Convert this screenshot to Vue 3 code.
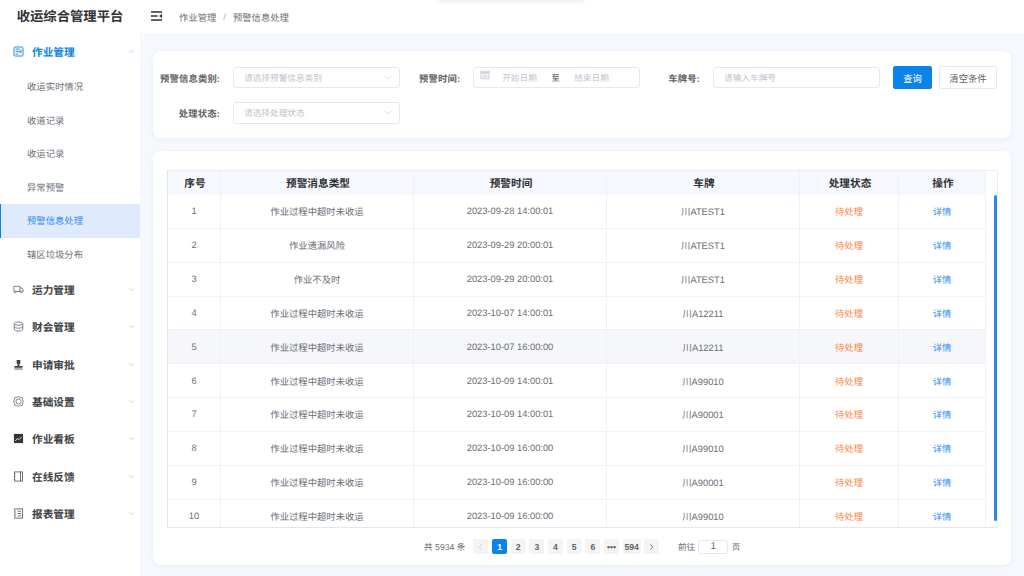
<template>
  <div class="page">
    <div class="popper-edge"></div>
    <aside class="sidebar">
      <h1 class="brand">收运综合管理平台</h1>
      <nav class="menu">
        <div class="group-head active">
          <svg class="group-icon" viewBox="0 0 12 12" fill="none" stroke="currentColor" stroke-width="0.9">
            <rect x="1" y="1" width="10" height="10" rx="1.400" fill="#e3f0fc" />
            <path d="M3 3.400h4M3 8.800h2.400" />
            <circle cx="8.200" cy="6" r="1" />
            <path d="M3 6h4" />
          </svg>
          <span>作业管理</span>
          <svg class="arrow" viewBox="0 0 10 6" fill="none" stroke="currentColor" stroke-width="0.8"><path d="M1.500 4.500 5 1.500l3.500 3" /></svg>
        </div>
        <a
          v-for="item in subItems"
          :key="item.label + item.current"
          class="sub-item"
          :class="{ current: item.current }"
        >{{ item.label }}</a>
        <div v-for="group in groups" :key="group.label" class="group-head">
          <svg class="group-icon" viewBox="0 0 12 12" fill="none" stroke="currentColor" stroke-width="0.9" v-html="group.icon"></svg>
          <span>{{ group.label }}</span>
          <svg class="arrow" viewBox="0 0 10 6" fill="none" stroke="currentColor" stroke-width="0.8"><path d="M1.500 1.500 5 4.500l3.500-3" /></svg>
        </div>
      </nav>
    </aside>

    <div class="main">
      <header class="topbar">
        <svg class="fold" viewBox="0 0 11 10" fill="none" stroke="#303133" stroke-width="1.400">
          <path d="M0 1h11M0 5h6.500M0 9h11" />
          <path d="M11 2.900 8 5l3 2.100z" fill="#303133" stroke="none" />
        </svg>
        <span class="crumb">作业管理</span>
        <span class="crumb-sep">/</span>
        <span class="crumb">预警信息处理</span>
      </header>

      <div class="content">
        <section class="card filter">
          <div class="filter-row">
            <label class="label label-first">预警信息类别:</label>
            <div class="field field-select">
              <span>请选择预警信息类别</span>
              <svg class="field-arrow" viewBox="0 0 10 6" fill="none" stroke="currentColor" stroke-width="0.7"><path d="M1 1l4 4 4-4" /></svg>
            </div>
            <label class="label label-time">预警时间:</label>
            <div class="field field-date">
              <svg class="cal" viewBox="0 0 10 10" fill="none" stroke="#c0c4cc" stroke-width="0.8">
                <rect x="1" y="1.200" width="8" height="7.600" />
                <path d="M1 2.400h8M1 3.400h8M2.600 5.400h4.800M2.600 7h4.800" />
              </svg>
              <span class="date-text">开始日期</span>
              <span class="date-sep">至</span>
              <span class="date-text">结束日期</span>
            </div>
            <label class="label label-plate">车牌号:</label>
            <div class="field field-plate"><span>请输入车牌号</span></div>
            <button class="btn btn-primary" type="button">查询</button>
            <button class="btn" type="button">清空条件</button>
          </div>
          <div class="filter-row">
            <label class="label label-first">处理状态:</label>
            <div class="field field-select">
              <span>请选择处理状态</span>
              <svg class="field-arrow" viewBox="0 0 10 6" fill="none" stroke="currentColor" stroke-width="0.7"><path d="M1 1l4 4 4-4" /></svg>
            </div>
          </div>
        </section>

        <section class="card list">
          <div class="table">
            <div class="row head">
              <div v-for="col in columns" :key="col" class="cell">{{ col }}</div>
              <div class="gutter"></div>
            </div>
            <div class="body">
              <div class="rows">
                <div
                  v-for="row in rows"
                  :key="row.no"
                  class="row"
                  :class="{ hover: row.no === 5 }"
                >
                  <div class="cell">{{ row.no }}</div>
                  <div class="cell">{{ row.type }}</div>
                  <div class="cell">{{ row.time }}</div>
                  <div class="cell">{{ row.plate }}</div>
                  <div class="cell status">待处理</div>
                  <div class="cell link">详情</div>
                </div>
              </div>
              <div class="thumb"></div>
            </div>
          </div>

          <footer class="pager">
            <span class="total">共 5934 条</span>
            <span class="page-btn muted">
              <svg viewBox="0 0 6 10" fill="none" stroke="currentColor" stroke-width="0.9"><path d="M4.500 1.500 1.500 5l3 3.500" /></svg>
            </span>
            <span
              v-for="p in pages"
              :key="p"
              class="page-btn"
              :class="{ on: p === '1', wide: p === '594' }"
            >{{ p }}</span>
            <span class="page-btn">
              <svg viewBox="0 0 6 10" fill="none" stroke="currentColor" stroke-width="0.9"><path d="M1.500 1.500 4.500 5l-3 3.500" /></svg>
            </span>
            <span class="goto">前往</span>
            <span class="goto-input">1</span>
            <span class="goto-unit">页</span>
          </footer>
        </section>
      </div>
    </div>
  </div>
</template>

<script setup>
const subItems = [
  { label: '收运实时情况', current: false },
  { label: '收道记录', current: false },
  { label: '收运记录', current: false },
  { label: '异常预警', current: false },
  { label: '预警信息处理', current: true },
  { label: '辖区垃圾分布', current: false }
]

const groups = [
  {
    label: '运力管理',
    icon: '<path d="M1.500 8.300H1V2.500h6.500v5.800H3.600M7.500 4.300h2.300l1.200 1.800v2.200h-.6M7.500 8.300h.6" stroke="#5d6b80"/><circle cx="2.600" cy="8.600" r="1" stroke="#5d6b80"/><circle cx="9.200" cy="8.600" r="1" stroke="#5d6b80"/>'
  },
  {
    label: '财会管理',
    icon: '<g stroke="#5d6b80"><ellipse cx="6" cy="2.800" rx="4.600" ry="1.800"/><path d="M1.400 2.800v6.400c0 1 2 1.800 4.600 1.800s4.600-.8 4.600-1.800V2.800M1.400 6c0 1 2 1.800 4.600 1.800S10.600 7 10.600 6"/></g>'
  },
  {
    label: '申请审批',
    icon: '<path d="M4 1.200h4v3.500l-1 1.300v1.500h3.500v2H1.500v-2H5V6L4 4.700z" fill="currentColor" stroke="none"/><path d="M1.500 10.900h9" />'
  },
  {
    label: '基础设置',
    icon: '<g stroke="#5d6b80"><path d="M6 .7 8 1.500l2.100.4.400 2.100.8 2-.8 2-.4 2.100L8 10.500l-2 .8-2-.8-2.100-.4-.4-2.100-.8-2 .8-2 .4-2.100L4 1.500z"/><circle cx="6" cy="6" r="2.800"/></g>'
  },
  {
    label: '作业看板',
    icon: '<rect x="1" y="1" width="10" height="10" fill="#33373d" stroke="none"/><path d="M2.500 8.400 5 6.200l1.500 1L9.500 4.200" stroke="#fff"/>'
  },
  {
    label: '在线反馈',
    icon: '<g stroke="#4b5361"><rect x="1.800" y="1" width="8.600" height="10"/><path d="M8.200 1v10M1 3h1.400M1 6h1.400M1 9h1.400"/></g>'
  },
  {
    label: '报表管理',
    icon: '<g stroke="#4b5361"><rect x="1.500" y="1" width="9" height="10"/><rect x="1.500" y="1" width="1.800" height="10" fill="#b9c2cf" stroke="none"/><path d="M5 3.500h3.800M5 6h3.800M5 8.500h3.800"/></g>'
  }
]

const columns = ['序号', '预警消息类型', '预警时间', '车牌', '处理状态', '操作']

const LONG = '作业过程中超时未收运'
const rows = [
  { no: 1, type: LONG, time: '2023-09-28 14:00:01', plate: '川ATEST1' },
  { no: 2, type: '作业遗漏风险', time: '2023-09-29 20:00:01', plate: '川ATEST1' },
  { no: 3, type: '作业不及时', time: '2023-09-29 20:00:01', plate: '川ATEST1' },
  { no: 4, type: LONG, time: '2023-10-07 14:00:01', plate: '川A12211' },
  { no: 5, type: LONG, time: '2023-10-07 16:00:00', plate: '川A12211' },
  { no: 6, type: LONG, time: '2023-10-09 14:00:01', plate: '川A99010' },
  { no: 7, type: LONG, time: '2023-10-09 14:00:01', plate: '川A90001' },
  { no: 8, type: LONG, time: '2023-10-09 16:00:00', plate: '川A99010' },
  { no: 9, type: LONG, time: '2023-10-09 16:00:00', plate: '川A90001' },
  { no: 10, type: LONG, time: '2023-10-09 16:00:00', plate: '川A99010' }
]

const pages = ['1', '2', '3', '4', '5', '6', '•••', '594']
</script>

<style scoped>
.page {
  position: relative;
  display: flex;
  width: 1024px;
  height: 576px;
  overflow: hidden;
  background: #f5f8fd;
  font-family: "Liberation Sans", "Noto Sans CJK SC", sans-serif;
  font-size: 9.33px;
  color: #6b6e75;
  text-rendering: geometricPrecision;
}

/* edge of a closed dropdown that pokes in at the top of the window */
.popper-edge {
  position: absolute;
  z-index: 1;
  top: -8px;
  left: 438px;
  width: 146px;
  height: 8px;
  background: #fff;
  box-shadow: 0 1px 4px rgba(0, 0, 0, 0.1);
}

/* sidebar */
.sidebar {
  flex: none;
  width: 140px;
  background: #fff;
}

.brand {
  margin: 0;
  height: 33px;
  line-height: 33px;
  text-align: center;
  font-size: 13.33px;
  font-weight: 700;
  color: #303133;
}

.menu {
  display: flex;
  flex-direction: column;
}

.group-head {
  display: flex;
  align-items: center;
  box-sizing: border-box;
  height: 37.33px;
  padding: 1px 5px 0 13px;
  font-size: 10.67px;
  font-weight: 700;
  color: #404246;
}

.group-head.active {
  color: #0a84e8;
}

.group-icon {
  flex: none;
  width: 11px;
  height: 11px;
  margin: -2px 8px 0 0;
}

.group-head span {
  flex: 1;
}

.arrow {
  flex: none;
  width: 7px;
  height: 5px;
  margin-top: -2px;
  color: #a8abb2;
}

.active .arrow {
  color: #8fc4f0;
}

.sub-item {
  display: block;
  height: 33.5px;
  line-height: 35px;
  padding-left: 27px;
}

.sub-item.current {
  color: #2f8cf0;
  background: #dfeafc;
  box-shadow: inset 1px 0 0 #0a84e8;
}

/* top bar */
.main {
  flex: 1;
  min-width: 0;
  display: flex;
  flex-direction: column;
}

.topbar {
  flex: none;
  display: flex;
  align-items: center;
  height: 33px;
  padding-left: 11px;
  background: #fff;
}

.fold {
  width: 11px;
  height: 10px;
  margin: -1px 17px 0 0;
}

.crumb-sep {
  margin: 0 7px;
  color: #a8abb2;
}

/* cards */
.content {
  flex: 1;
  display: flex;
  flex-direction: column;
  gap: 13px;
  padding: 18px 13px 11px;
  min-height: 0;
}

.card {
  background: #fff;
  border-radius: 8px;
  box-shadow: 0 1px 4px rgba(200, 215, 235, 0.25);
}

.filter {
  flex: none;
  box-sizing: border-box;
  height: 87px;
  padding: 16px 14px 0 7px;
  display: flex;
  flex-direction: column;
  gap: 14px;
}

.filter-row {
  display: flex;
  align-items: center;
  height: 21.33px;
}

.label {
  flex: none;
  text-align: right;
  white-space: nowrap;
  letter-spacing: 0.15px;
  font-weight: 700;
  color: #606266;
}

.label-first {
  width: 60px;
  margin-right: 13px;
}

.label-time {
  width: 41px;
  margin: 0 13px 0 19px;
}

.label-plate {
  width: 32px;
  margin: 0 13px 0 28px;
}

.field {
  flex: none;
  display: flex;
  align-items: center;
  height: 21.33px;
  border: 1px solid #e6e8ee;
  border-radius: 3px;
  box-sizing: border-box;
  font-size: 8.67px;
  color: #c0c4cc;
}

.field-select {
  width: 167px;
  padding: 0 7px 0 10px;
  justify-content: space-between;
}

.field-arrow {
  width: 8px;
  height: 5px;
}

.field-date {
  width: 167px;
  padding-left: 6px;
}

.cal {
  flex: none;
  width: 10px;
  height: 10px;
  margin: -6px 12px 0 0;
}

.date-text {
  width: 35px;
  text-align: center;
}

.date-sep {
  width: 37px;
  text-align: center;
  color: #404246;
}

.field-plate {
  width: 167px;
  padding-left: 10px;
}

.btn {
  flex: none;
  height: 22.67px;
  width: 39px;
  margin-left: 13px;
  padding: 0;
  border: 1px solid #e6e8ee;
  border-radius: 2px;
  background: #fff;
  font: inherit;
  color: #606266;
}

.btn + .btn {
  width: 58px;
  margin-left: 7px;
}

.btn-primary {
  border-color: #0a84e8;
  background: #0a84e8;
  color: #fff;
}

/* table */
.list {
  flex: 1;
  min-height: 0;
  padding: 19px 14px 0;
  display: flex;
  flex-direction: column;
}

.table {
  flex: none;
  height: 358px;
  box-sizing: border-box;
  width: 831px;
  border: 1px solid #e4e6ea;
  border-top-color: #eceef2;
  border-right-color: #eceef2;
  overflow: hidden;
  display: flex;
  flex-direction: column;
}

.row {
  display: grid;
  grid-template-columns: 53px 193px 193px 193px 99px 87px;
  height: 33.85px;
  box-sizing: border-box;
  border-bottom: 1px solid #f0f2f7;
}

.row.hover {
  background: #f5f7fa;
}

.row.head {
  flex: none;
  grid-template-columns: 53px 193px 193px 193px 99px 87px 1fr;
  height: 24px;
  border-bottom: none;
  font-size: 10.67px;
  font-weight: 700;
  color: #303133;
}

.head .cell {
  background: #f5f8fe;
  padding-left: 2px;
}

.cell {
  display: flex;
  align-items: center;
  justify-content: center;
  border-right: 1px solid #f0f2f7;
}

.body {
  flex: 1;
  min-height: 0;
  display: flex;
  position: relative;
  overflow: hidden;
}

.rows {
  flex: none;
  width: 818px;
}

.status {
  color: #ff7f43;
}

.link {
  color: #2f8cf0;
}

.thumb {
  position: absolute;
  top: 0;
  right: 0;
  width: 3px;
  height: 326px;
  border-radius: 2px;
  background: #2f88e4;
}

/* pager */
.pager {
  flex: 1;
  display: flex;
  align-items: center;
  padding-left: 257px;
  font-size: 8.67px;
}

.total {
  margin-right: 8px;
}

.page-btn {
  flex: none;
  display: flex;
  align-items: center;
  justify-content: center;
  width: 15px;
  height: 15px;
  margin-right: 3.67px;
  border-radius: 2px;
  background: #f4f4f5;
  font-size: 8.67px;
  font-weight: 700;
  color: #606266;
}

.page-btn svg {
  width: 5px;
  height: 8px;
}

.page-btn.muted {
  color: #c0c4cc;
}

.page-btn.on {
  background: #0a84e8;
  color: #fff;
}

.page-btn.wide {
  width: 18px;
}

.goto {
  margin-left: 15px;
}

.goto-input {
  width: 30px;
  height: 14px;
  margin: 0 3.5px 0 3px;
  line-height: 12px;
  box-sizing: border-box;
  border: 1px solid #e6e8ee;
  border-radius: 3px;
  text-align: center;
  font-size: 10px;
}
</style>
